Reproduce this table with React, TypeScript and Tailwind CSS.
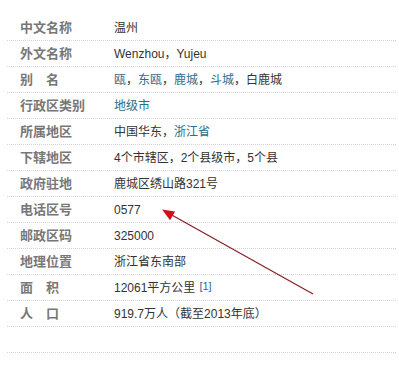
import React from "react"

type Part = { text: string; link?: boolean; sup?: boolean }

interface Row {
    label: string
    value: Part[]
}

const rows: Row[] = [
    { label: "中文名称", value: [{ text: "温州" }] },
    { label: "外文名称", value: [{ text: "Wenzhou，Yujeu" }] },
    {
        label: "别　名",
        value: [
            { text: "瓯", link: true },
            { text: "，" },
            { text: "东瓯", link: true },
            { text: "，" },
            { text: "鹿城", link: true },
            { text: "，" },
            { text: "斗城", link: true },
            { text: "，白鹿城" },
        ],
    },
    { label: "行政区类别", value: [{ text: "地级市", link: true }] },
    { label: "所属地区", value: [{ text: "中国华东，" }, { text: "浙江省", link: true }] },
    { label: "下辖地区", value: [{ text: "4个市辖区，2个县级市，5个县" }] },
    { label: "政府驻地", value: [{ text: "鹿城区绣山路321号" }] },
    { label: "电话区号", value: [{ text: "0577" }] },
    { label: "邮政区码", value: [{ text: "325000" }] },
    { label: "地理位置", value: [{ text: "浙江省东南部" }] },
    { label: "面　积", value: [{ text: "12061平方公里" }, { text: "[1]", link: true, sup: true }] },
    { label: "人　口", value: [{ text: "919.7万人（截至2013年底）" }] },
    { label: "", value: [] },
]

function Value({ parts }: { parts: Part[] }) {
    return (
        <span>
            {parts.map((p, i) =>
                p.sup ? (
                    <sup key={i} className="ml-[4px] text-[11px] text-[#2a6d8c] relative top-[-2px]">
                        {p.text}
                    </sup>
                ) : (
                    <span key={i} className={p.link ? "text-[#2a6d8c]" : "text-[#333]"}>
                        {p.text}
                    </span>
                )
            )}
        </span>
    )
}

export default function App() {
    return (
        <div
            className="relative w-[399px] h-[372px] bg-white overflow-hidden pt-[15px] pl-[7px]"
            style={{ fontFamily: '"Liberation Sans", "Noto Sans CJK SC", sans-serif' }}
        >
            <div className="w-[389px] flex flex-col">
                {rows.map((r, i) => (
                    <div
                        key={i}
                        className="h-[26px] flex items-center border-b border-dotted border-[#d4d4d4]"
                    >
                        <div className="w-[107px] pl-[13px] text-[13px] font-bold text-[#777] whitespace-nowrap">
                            {r.label}
                        </div>
                        <div className="text-[12px] whitespace-nowrap">
                            <Value parts={r.value} />
                        </div>
                    </div>
                ))}
            </div>

            {/* annotation arrow */}
            <svg className="absolute left-0 top-0 pointer-events-none" width="399" height="372">
                <line x1="313" y1="294" x2="170" y2="214" stroke="#8a1c24" strokeWidth="1.2" />
                <polygon points="162,209.5 175,211.4 170.1,220.2" fill="#d0101c" />
            </svg>
        </div>
    )
}
